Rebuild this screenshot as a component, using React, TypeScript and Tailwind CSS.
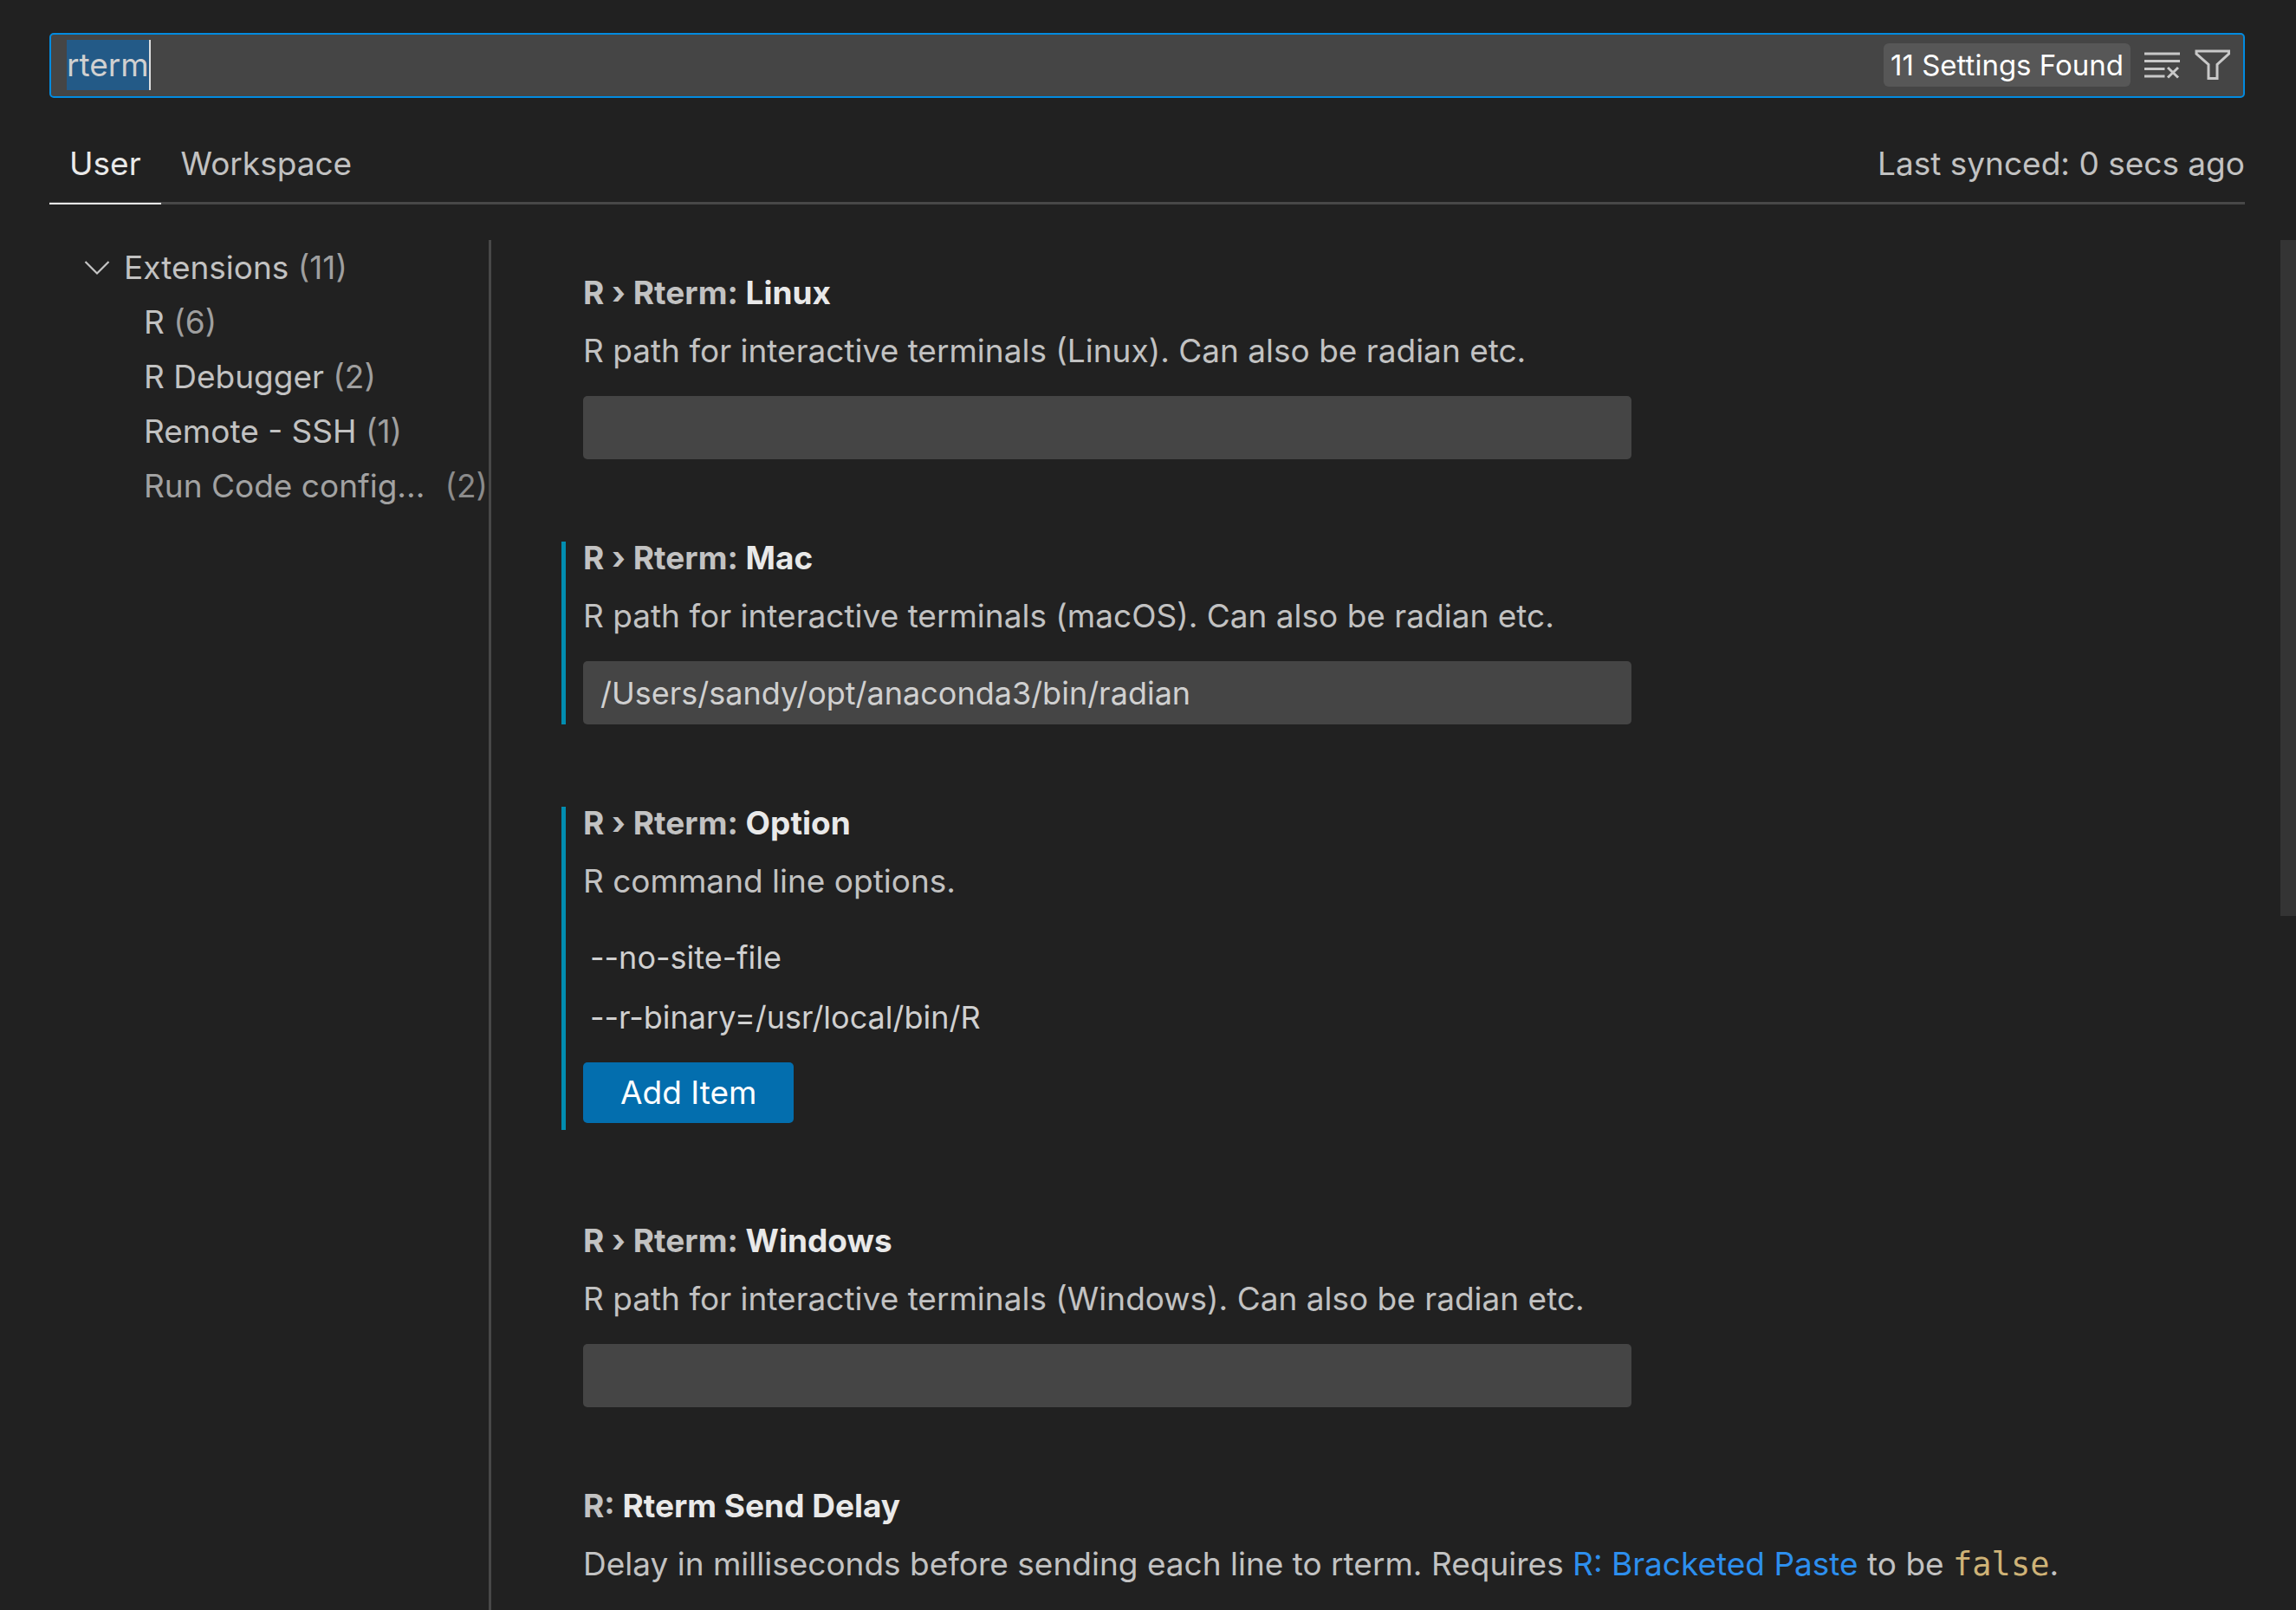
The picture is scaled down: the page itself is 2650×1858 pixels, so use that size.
import { useState, type ReactNode } from "react";

function ClearIcon() {
  return (
    <svg viewBox="0 0 42 32" className="h-8 w-[42px]" fill="none" stroke="#c8c8c8" strokeWidth="3" aria-hidden="true">
      <path d="M0 3H41M0 11.5H41M0 20.5H23.5M0 29H23.5" />
      <path d="M27 19L39 30.500M39 19L27 30.500" />
    </svg>
  );
}

function FilterIcon() {
  return (
    <svg viewBox="0 0 42 36" className="h-9 w-[42px]" fill="none" stroke="#c8c8c8" strokeWidth="3" aria-hidden="true">
      <path d="M2 2H39.500V5L26 17.500V33.500H16V17.500L2 5Z" />
    </svg>
  );
}

function ChevronIcon() {
  return (
    <svg viewBox="0 0 30 18" className="h-[18px] w-[30px]" fill="none" stroke="#c5c5c5" strokeWidth="2.200" aria-hidden="true">
      <path d="M1.500 2L15 15.500L28.500 2" />
    </svg>
  );
}

const groups = [
  { name: "R", count: 6 },
  { name: "R Debugger", count: 2 },
  { name: "Remote - SSH", count: 1 },
];

type SettingProps = {
  id?: string;
  scope: string;
  name: string;
  description: ReactNode;
  modified?: boolean;
  className?: string;
  children: ReactNode;
};

function Setting({ id, scope, name, description, modified, className = "", children }: SettingProps) {
  const title = (
    <>
      {scope} <span className="text-[#e9e9e9]">{name}</span>
    </>
  );
  return (
    <section className={`border-l-5 pl-5 ${modified ? "border-[#028db0]" : "border-transparent"} ${className}`}>
      <h2 className="text-[37px] leading-[38px] font-bold text-[#c2c2c2]">
        {id ? <label htmlFor={id}>{title}</label> : title}
      </h2>
      <p className="mt-[22px] text-[37px] leading-[52px] text-[#c2c2c2]">{description}</p>
      {children}
    </section>
  );
}

function TextSetting({ id, value, narrow }: { id: string; value: string; narrow?: boolean }) {
  return (
    <input
      id={id}
      type="text"
      defaultValue={value}
      className={`mt-[26px] block h-[73px] max-w-full rounded-[5px] bg-[#454545] px-5 text-[36px] text-[#d0d0d0] outline-none ${narrow ? "w-[574px]" : "w-[1210px]"}`}
    />
  );
}

export default function App() {
  const [query, setQuery] = useState("rterm");
  return (
    <div className="flex h-screen flex-col overflow-hidden bg-[#212121] font-['Inter',sans-serif] text-[37px] text-[#c2c2c2]">
      <header className="pt-[38px] pr-[59px] pl-[57px]">
        <div className="flex h-[75px] items-center rounded-[5px] border-2 border-[#028be0] bg-[#454545] pr-[14px] pb-0.5 pl-[18px]">
          <input
            type="text"
            aria-label="Search settings"
            value={query}
            onChange={(e) => setQuery(e.target.value)}
            className="h-[58px] [field-sizing:content] border-r-2 border-[#dddddd] bg-[#235a87] text-[37px] text-[#d0d0d0] outline-none"
          />
          <span className="mr-4 ml-auto rounded-[6px] bg-[#575757] px-2 text-[33px] leading-[50px] text-white">11 Settings Found</span>
          <button type="button" aria-label="Clear search results" className="mr-4">
            <ClearIcon />
          </button>
          <button type="button" aria-label="Filter settings">
            <FilterIcon />
          </button>
        </div>
        <div className="mt-[38px] flex h-[85px] border-b-[3px] border-[#484848]">
          <div role="tablist" className="-mb-[3px] flex">
            <button type="button" role="tab" aria-selected="true" className="border-b-2 border-[#e7e7e7] px-[23px] pb-2 text-[#e9e9e9]">
              User
            </button>
            <button type="button" role="tab" aria-selected="false" className="border-b-2 border-transparent px-[23px] pb-2">
              Workspace
            </button>
          </div>
          <span className="ml-auto self-center pb-1.5">Last synced: 0 secs ago</span>
        </div>
      </header>

      <div className="mt-[41px] flex min-h-0 flex-1">
        <nav aria-label="Settings groups" className="w-[567px] shrink-0 border-r-[3px] border-[#484848] leading-[63px]">
          <button type="button" aria-expanded="true" className="flex items-center pl-[97px]">
            <ChevronIcon />
            <span className="ml-4">
              Extensions <span className="text-[#9f9f9f]">(11)</span>
            </span>
          </button>
          <ul>
            {groups.map((g) => (
              <li key={g.name}>
                <a href="#settings" className="block pl-[166px]">
                  {g.name} <span className="text-[#9f9f9f]">({g.count})</span>
                </a>
              </li>
            ))}
            <li>
              <a href="#settings" className="flex justify-between pr-px pl-[166px] text-[#a2a2a2]">
                <span>Run Code config...</span>
                <span className="text-[#8b8b8b]">(2)</span>
              </a>
            </li>
          </ul>
        </nav>

        <main id="settings" className="min-w-0 flex-1 overflow-hidden pt-[42px] pl-[81px]">
          <Setting id="linux" scope="R › Rterm:" name="Linux" description="R path for interactive terminals (Linux). Can also be radian etc.">
            <TextSetting id="linux" value="" />
          </Setting>
          <Setting id="mac" modified className="mt-[95px]" scope="R › Rterm:" name="Mac" description="R path for interactive terminals (macOS). Can also be radian etc.">
            <TextSetting id="mac" value="/Users/sandy/opt/anaconda3/bin/radian" />
          </Setting>
          <Setting modified className="mt-[95px] pb-2" scope="R › Rterm:" name="Option" description="R command line options.">
            <ul className="mt-7 pl-2 text-[36px] leading-[69px] text-[#d0d0d0]">
              <li>--no-site-file</li>
              <li>--r-binary=/usr/local/bin/R</li>
            </ul>
            <button type="button" className="mt-[17px] h-[70px] rounded-[5px] bg-[#036eae] px-[43px] text-white">
              Add Item
            </button>
          </Setting>
          <Setting id="windows" className="mt-[109px]" scope="R › Rterm:" name="Windows" description="R path for interactive terminals (Windows). Can also be radian etc.">
            <TextSetting id="windows" value="" />
          </Setting>
          <Setting
            id="delay"
            className="mt-[95px]"
            scope="R:"
            name="Rterm Send Delay"
            description={
              <>
                Delay in milliseconds before sending each line to rterm. Requires{" "}
                <a href="#bracketed-paste" className="text-[#2d8fee]">
                  R: Bracketed Paste
                </a>{" "}
                to be <code className="font-['DejaVu_Sans_Mono',monospace] text-[37px] text-[#cfb377]">false</code>.
              </>
            }
          >
            <TextSetting id="delay" value="" narrow />
          </Setting>
        </main>

        <div className="w-[18px] shrink-0">
          <div className="h-[780px] bg-[#343434]" />
        </div>
      </div>
    </div>
  );
}
